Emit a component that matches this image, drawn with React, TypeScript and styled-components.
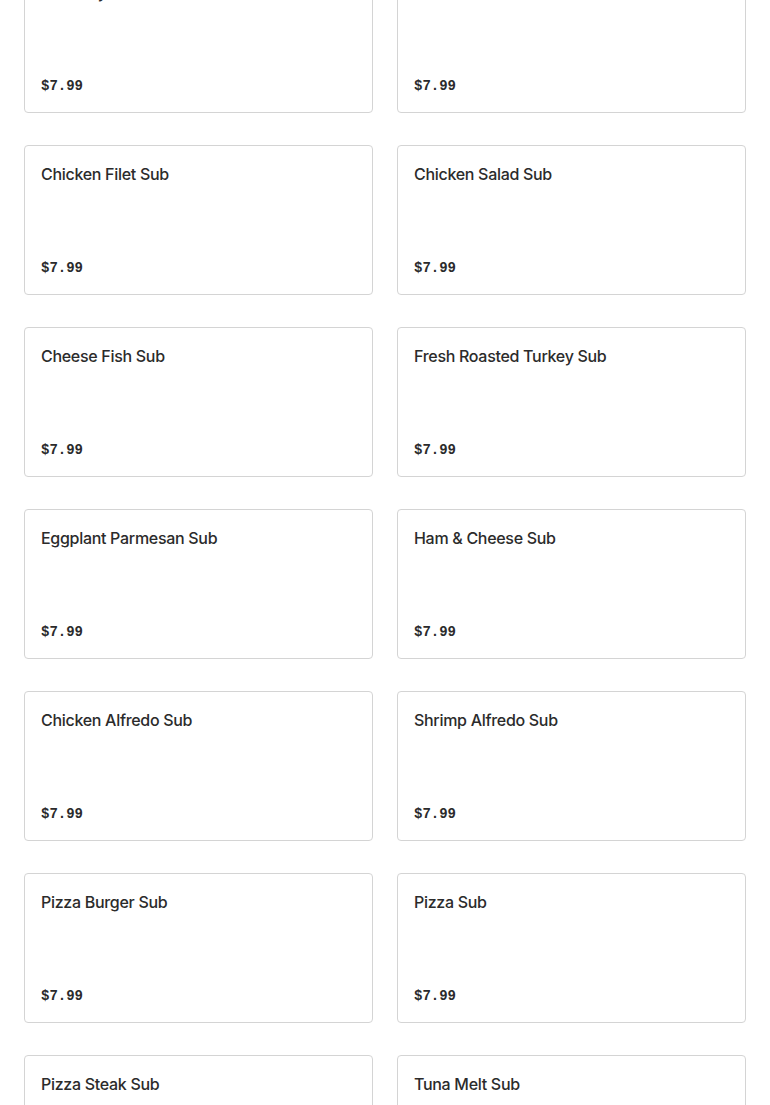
import React from "react";
import styled, { createGlobalStyle } from "styled-components";

const Global = createGlobalStyle`
  html, body { margin: 0; padding: 0; background: #ffffff; }
  body { font-family: Inter, "Noto Sans", sans-serif; overflow: hidden; }
`;

const Page = styled.div`
  height: 1105px;
  overflow: hidden;
`;

const Grid = styled.div`
  display: grid;
  grid-template-columns: 1fr 1fr;
  column-gap: 24px;
  row-gap: 32px;
  padding: 0 24px;
  margin-top: -37px;
`;

const Card = styled.div`
  box-sizing: border-box;
  height: 150px;
  border: 1px solid #d4d4d4;
  border-radius: 4px;
  padding: 16px;
  display: flex;
  flex-direction: column;
  justify-content: space-between;
  background: #fff;
`;

const Title = styled.div`
  font-family: Inter, "Noto Sans", sans-serif;
  font-size: 16px;
  font-weight: 500;
  line-height: 24px;
  letter-spacing: -0.3px;
  color: #2b2b2b;
`;

const Price = styled.div`
  font-family: "Liberation Mono", "DejaVu Sans Mono", monospace;
  font-size: 14px;
  font-weight: 700;
  line-height: 20px;
  color: #2b2b2b;
`;

const items = [
  "Lamb Gyro Sub",
  "Meatball Sub",
  "Chicken Filet Sub",
  "Chicken Salad Sub",
  "Cheese Fish Sub",
  "Fresh Roasted Turkey Sub",
  "Eggplant Parmesan Sub",
  "Ham & Cheese Sub",
  "Chicken Alfredo Sub",
  "Shrimp Alfredo Sub",
  "Pizza Burger Sub",
  "Pizza Sub",
  "Pizza Steak Sub",
  "Tuna Melt Sub",
];

export default function App() {
  return (
    <Page>
      <Global />
      <Grid>
        {items.map((name) => (
          <Card key={name}>
            <Title>{name}</Title>
            <Price>$7.99</Price>
          </Card>
        ))}
      </Grid>
    </Page>
  );
}
